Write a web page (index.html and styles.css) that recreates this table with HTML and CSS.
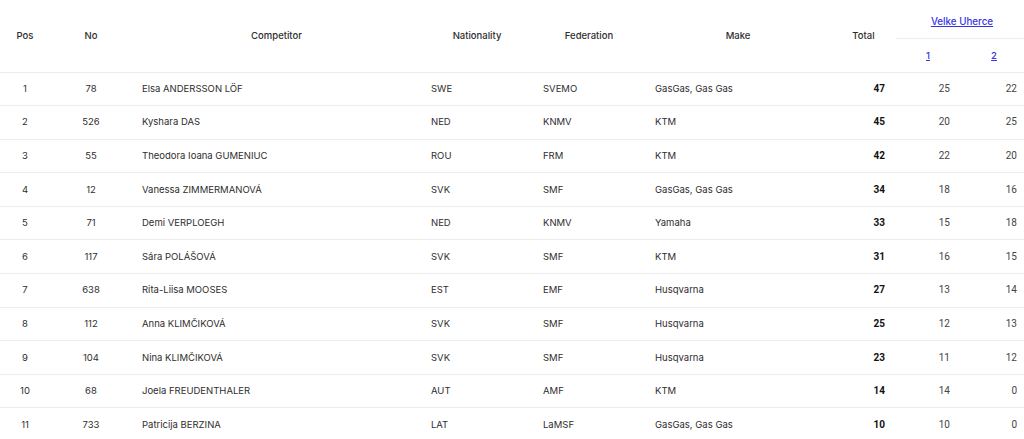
FILE: index.html
```html
<!DOCTYPE html>
<html lang="en">
<head>
<meta charset="utf-8">
<title>Results</title>
<link rel="stylesheet" href="styles.css">
</head>
<body>
<div class="wrap">
<table class="results">
  <colgroup>
    <col class="c-pos"><col class="c-no"><col class="c-comp"><col class="c-nat"><col class="c-fed"><col class="c-make"><col class="c-total"><col class="c-r1"><col class="c-r2">
  </colgroup>
  <thead>
    <tr class="h1">
      <th rowspan="2">Pos</th>
      <th rowspan="2">No</th>
      <th rowspan="2">Competitor</th>
      <th rowspan="2">Nationality</th>
      <th rowspan="2">Federation</th>
      <th rowspan="2">Make</th>
      <th rowspan="2">Total</th>
      <th colspan="2" class="event"><a href="#">Velke Uherce</a></th>
    </tr>
    <tr class="h2">
      <th class="race"><a href="#">1</a></th>
      <th class="race"><a href="#">2</a></th>
    </tr>
  </thead>
  <tbody>
    <tr><td class="pos">1</td><td class="no">78</td><td>Elsa ANDERSSON LÖF</td><td>SWE</td><td>SVEMO</td><td>GasGas, Gas Gas</td><td class="total">47</td><td class="r1">25</td><td class="r2">22</td></tr>
    <tr><td class="pos">2</td><td class="no">526</td><td>Kyshara DAS</td><td>NED</td><td>KNMV</td><td>KTM</td><td class="total">45</td><td class="r1">20</td><td class="r2">25</td></tr>
    <tr><td class="pos">3</td><td class="no">55</td><td>Theodora Ioana GUMENIUC</td><td>ROU</td><td>FRM</td><td>KTM</td><td class="total">42</td><td class="r1">22</td><td class="r2">20</td></tr>
    <tr><td class="pos">4</td><td class="no">12</td><td>Vanessa ZIMMERMANOVÁ</td><td>SVK</td><td>SMF</td><td>GasGas, Gas Gas</td><td class="total">34</td><td class="r1">18</td><td class="r2">16</td></tr>
    <tr><td class="pos">5</td><td class="no">71</td><td>Demi VERPLOEGH</td><td>NED</td><td>KNMV</td><td>Yamaha</td><td class="total">33</td><td class="r1">15</td><td class="r2">18</td></tr>
    <tr><td class="pos">6</td><td class="no">117</td><td>Sára POLÁŠOVÁ</td><td>SVK</td><td>SMF</td><td>KTM</td><td class="total">31</td><td class="r1">16</td><td class="r2">15</td></tr>
    <tr><td class="pos">7</td><td class="no">638</td><td>Rita-Liisa MOOSES</td><td>EST</td><td>EMF</td><td>Husqvarna</td><td class="total">27</td><td class="r1">13</td><td class="r2">14</td></tr>
    <tr><td class="pos">8</td><td class="no">112</td><td>Anna KLIMČIKOVÁ</td><td>SVK</td><td>SMF</td><td>Husqvarna</td><td class="total">25</td><td class="r1">12</td><td class="r2">13</td></tr>
    <tr><td class="pos">9</td><td class="no">104</td><td>Nina KLIMČIKOVÁ</td><td>SVK</td><td>SMF</td><td>Husqvarna</td><td class="total">23</td><td class="r1">11</td><td class="r2">12</td></tr>
    <tr><td class="pos">10</td><td class="no">68</td><td>Joela FREUDENTHALER</td><td>AUT</td><td>AMF</td><td>KTM</td><td class="total">14</td><td class="r1">14</td><td class="r2">0</td></tr>
    <tr><td class="pos">11</td><td class="no">733</td><td>Patricija BERZINA</td><td>LAT</td><td>LaMSF</td><td>GasGas, Gas Gas</td><td class="total">10</td><td class="r1">10</td><td class="r2">0</td></tr>
  </tbody>
</table>
</div>
</body>
</html>
```
FILE: styles.css
```css
html, body {
  margin: 0;
  padding: 0;
  background: #ffffff;
}

.wrap {
  width: 1024px;
  overflow: hidden;
}

.results {
  width: 1028px;
  table-layout: fixed;
  border-collapse: collapse;
  font-family: Inter, "Liberation Sans", sans-serif;
  font-size: 9.5px;
  color: #2e2e2e;
}

.c-pos { width: 50px; }
.c-no { width: 82px; }
.c-comp { width: 289px; }
.c-nat { width: 112px; }
.c-fed { width: 112px; }
.c-make { width: 186px; }
.c-total { width: 65px; }
.c-r1 { width: 64px; }
.c-r2 { width: 68px; }

.results th {
  font-weight: 500;
  text-align: center;
  padding: 0;
  color: #2e2e2e;
}

.results thead tr.h1 { height: 38px; }
.results thead tr.h2 { height: 34px; }

.results th.event {
  border-bottom: 1px solid #ececec;
  padding-top: 5px;
}

.results th.event a {
  font-size: 9.8px;
}

.results thead tr.h2 th {
  border-bottom: 1px solid #ececec;
}

.results thead tr.h1 th[rowspan] {
  border-bottom: 1px solid #ececec;
}

.results a {
  color: #3434e6;
  text-decoration: underline;
}

.results td {
  height: 32.6px;
  padding: 0 0 0 10px;
  border-bottom: 1px solid #ececec;
  line-height: 16px;
  white-space: nowrap;
}

.results td.pos,
.results td.no {
  text-align: center;
  padding: 0;
}

.results td.total,
.results td.r1,
.results td.r2 {
  font-family: Roboto, "Liberation Sans", sans-serif;
  font-size: 10px;
  text-align: right;
}

.results td.total {
  font-weight: 700;
  color: #111111;
  padding-right: 11px;
}

.results td.r1 {
  padding-right: 10px;
  color: #444444;
}

.results td.r2 {
  padding-right: 11px;
  color: #444444;
}
```
